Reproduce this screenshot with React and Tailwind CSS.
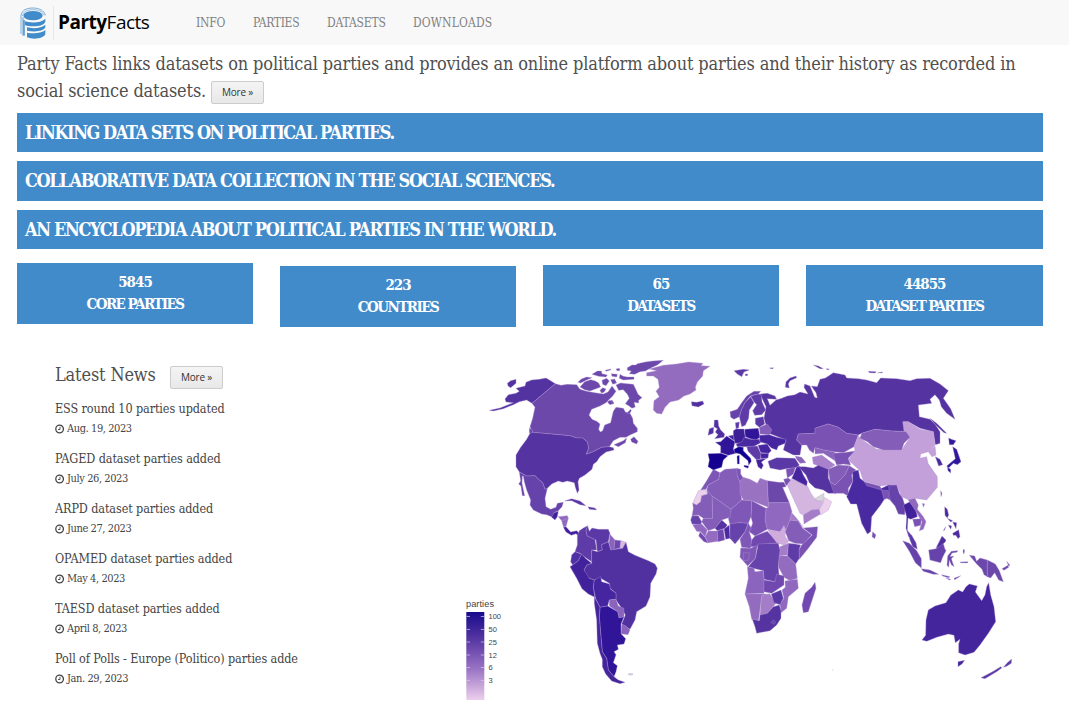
import React from "react";

const SLAB = "font-['DejaVu_Serif_Condensed','DejaVu_Serif',serif] [font-stretch:condensed]";

const NAV = [
  ["INFO", "w-[57px] tracking-[-0.2px]"],
  ["PARTIES", "w-[74px] tracking-[-0.35px]"],
  ["DATASETS", "w-[86px] tracking-[-0.15px]"],
  ["DOWNLOADS", "w-[90px] tracking-[0.15px]"],
];

const BANNERS = [
  ["LINKING DATA SETS ON POLITICAL PARTIES.", "h-[39px] tracking-[-1.45px]"],
  ["COLLABORATIVE DATA COLLECTION IN THE SOCIAL SCIENCES.", "h-[40px] tracking-[-1.34px]"],
  ["AN ENCYCLOPEDIA ABOUT POLITICAL PARTIES IN THE WORLD.", "h-[39px] tracking-[-1.35px]"],
];

const STATS = [
  ["5845", "CORE PARTIES", "w-[236px] mt-0", "tracking-[-1.55px]"],
  ["223", "COUNTRIES", "w-[236px] mt-[3px]", "tracking-[-1.5px]"],
  ["65", "DATASETS", "w-[236px] mt-[2px]", "tracking-[-1.7px]"],
  ["44855", "DATASET PARTIES", "w-[237px] mt-[2px]", "tracking-[-1.65px]"],
];

const NEWS = [
  ["ESS round 10 parties updated", "Aug. 19, 2023"],
  ["PAGED dataset parties added", "July 26, 2023"],
  ["ARPD dataset parties added", "June 27, 2023"],
  ["OPAMED dataset parties added", "May 4, 2023"],
  ["TAESD dataset parties added", "April 8, 2023"],
  ["Poll of Polls - Europe (Politico) parties added", "Jan. 29, 2023"],
];

/* Map regions; every group has its own origin and is drawn at three units per pixel. */
const REGIONS = [
  {
    x: 480, y: 350,
    shapes: [
      ["#5333a0", "M28,181 60,174 100,158 78,156 75,147 85,134 108,130 118,124 108,115 135,108 138,97 155,90 178,88 198,84 212,92 226,101 156,160 140,150 118,155 100,164 70,176 40,183Z M82,100 92,92 108,88 108,100 92,113 84,108Z"],
      ["#6c48ab", "M226,101 243,106 262,103 290,104 300,118 320,124 345,128 370,132 384,126 396,108 402,116 408,124 398,138 388,148 378,158 360,168 335,178 327,195 336,208 350,214 360,222 356,238 361,246 368,242 374,225 392,218 396,200 400,184 408,172 430,175 436,186 450,190 458,205 460,220 472,235 472,245 450,255 438,262 420,262 400,272 388,290 365,292 340,305 318,313 326,295 322,276 308,264 290,264 270,257 158,247 150,230 158,205 165,172 156,160Z"],
      ["#6c48ab", "M386,156 396,150 402,160 390,164Z M452,268 462,260 474,274 470,282 455,276Z M402,284 430,272 440,264 436,278 415,290Z M148,234 158,240 156,256 148,248Z M440,190 452,178 454,182 448,192Z"],
      ["#5533a0", "M158,247 270,257 290,264 308,264 322,276 326,295 318,313 340,305 365,292 388,290 400,293 402,300 378,306 360,320 350,335 340,343 336,358 315,375 298,385 294,395 297,420 292,430 286,412 283,398 262,393 248,397 235,393 215,402 202,415 195,418 188,398 178,390 165,377 140,378 118,366 108,350 108,315 122,292 140,268 150,250Z"],
      ["#6543aa", "M118,366 140,378 165,377 178,390 188,398 195,418 202,415 195,445 198,470 212,478 228,472 232,460 250,457 246,470 235,482 222,488 218,502 200,494 185,492 160,480 150,465 152,450 140,420 133,395 130,378 127,378 126,400 134,437 127,437 123,408 116,402 122,393Z"],
      ["#4020a0", "M222,488 235,484 232,500 225,510 215,502Z M250,532 258,530 272,546 290,542 300,552 296,558 288,551 274,556 258,546Z"],
      ["#9068c0", "M235,500 262,497 265,505 245,512Z M245,512 265,505 258,530 250,530Z"],
      ["#5a38a5", "M254,453 275,446 300,453 318,467 300,464 275,452Z M324,470 345,474 350,480 328,478Z"],
      ["#936cbf", "M500,68 530,62 508,57 550,46 590,42 625,36 668,40 664,47 690,49 670,62 668,78 652,96 646,112 648,120 630,132 612,138 596,150 570,156 555,172 545,192 530,190 520,180 522,152 538,140 528,124 538,112 534,88 520,78 500,78Z"],
      ["#5030a0", "M634,155 650,157 668,153 672,162 655,171 636,167Z"],
    ],
  },
  {
    x: 570, y: 355,
    shapes: [
      ["#6c48ab", "M24,82 34,72 50,66 66,68 48,76 32,84Z M30,96 44,80 62,74 76,78 86,84 92,96 82,100 70,104 60,108 44,104Z M66,58 82,48 94,48 96,56 112,60 108,66 86,64Z M106,46 122,42 122,45 108,49Z M138,42 148,40 150,46 142,48Z M124,56 142,58 140,66 126,64Z M96,76 110,70 118,78 108,92 98,88Z M122,74 134,72 140,84 128,88Z M150,58 160,64 172,66 192,66 192,73 160,75 148,70Z M90,106 98,98 108,102 102,112 94,114Z"],
      ["#6c48ab", "M138,90 152,84 172,86 190,88 198,104 204,118 216,128 206,136 206,144 192,142 196,156 186,160 176,152 166,146 178,130 172,118 160,104 146,106Z"],
      ["#6c48ab", "M172,38 186,30 198,30 202,26 226,21 248,18 280,16 262,30 244,38 226,48 210,50 194,58 178,56 184,48 172,46Z M112,140 120,136 132,146 118,148Z"],
    ],
  },
  {
    x: 540, y: 500,
    shapes: [
      ["#5f3ba8", "M112,108 118,92 130,84 143,77 138,92 142,108 165,118 170,150 155,150 155,185 135,172 120,160 105,155 112,135Z"],
      ["#5a38a5", "M143,77 148,94 156,84 175,88 205,88 210,100 205,125 185,134 187,150 172,155 168,120 142,108 138,92Z"],
      ["#8a63bc", "M210,103 225,120 222,150 212,150 207,130Z"],
      ["#6a48b0", "M225,120 243,122 240,145 222,148Z"],
      ["#dcb8e2", "M243,122 258,127 248,145 240,145Z"],
      ["#5130a0", "M155,190 155,150 172,155 187,150 185,134 205,125 212,150 248,145 258,127 265,155 285,166 325,182 345,192 352,205 348,222 332,250 330,290 318,318 290,335 285,360 270,388 245,372 256,345 245,325 228,300 228,280 210,265 208,250 182,235 163,240 148,235 135,225 132,210 140,195Z"],
      ["#5030a5", "M105,155 125,163 115,182 98,195 92,185 95,165Z"],
      ["#42229a", "M125,163 138,176 155,190 140,195 132,210 148,235 163,240 160,262 165,292 145,282 126,266 110,235 90,200 98,195 115,182Z"],
      ["#4626a0", "M163,240 182,230 185,245 208,252 212,268 228,280 228,298 208,300 203,318 180,322 167,296 160,262Z"],
      ["#8a63bc", "M208,300 228,298 235,318 252,325 252,350 237,354 233,335 208,318Z M245,373 258,378 270,390 264,404 243,401Z"],
      ["#301598", "M180,322 203,318 233,335 237,354 252,350 243,372 243,401 257,416 252,432 232,435 235,448 222,455 228,464 220,488 232,497 228,515 222,530 205,510 200,475 187,455 182,400 178,350Z"],
      ["#45259c", "M163,290 180,322 178,350 182,400 187,455 200,475 205,510 222,530 235,540 255,547 240,551 215,543 197,522 187,500 187,478 180,460 172,430 170,360 163,310Z"],
      ["#d8d8d8", "M266,521 278,521 277,525 266,525Z"],
    ],
  },
  {
    x: 680, y: 450,
    shapes: [
      ["#7d55b5", "M100,58 120,68 116,88 85,105 78,118 62,120 80,92Z"],
      ["#ecd0ec", "M55,122 82,120 82,133 65,137 62,155 50,165 38,160Z"],
      ["#835db8", "M120,68 135,58 175,55 172,78 180,95 185,150 153,178 96,138 80,120 85,105 116,88Z"],
      ["#7a52b3", "M170,57 182,57 182,72 190,84 180,95 172,78Z"],
      ["#9a72c2", "M180,95 190,82 210,88 232,100 240,85 262,92 265,172 215,152 190,150 180,130Z"],
      ["#6c48ab", "M262,92 295,97 312,97 318,110 308,112 328,158 265,158Z"],
      ["#9068c0", "M265,158 328,158 336,185 330,210 318,240 300,245 262,238 255,210 258,175 265,172Z"],
      ["#7a52b3", "M215,152 258,175 255,210 262,238 225,258 208,245 218,220 213,200Z"],
      ["#7f58b7", "M153,178 185,150 215,152 213,200 205,220 175,218 150,225 145,205Z"],
      ["#835db8", "M96,138 153,178 150,202 125,210 105,235 85,242 65,215 70,205 98,205Z"],
      ["#835db8", "M82,120 96,138 98,205 70,205 55,195 36,198 40,175 38,160 50,165 62,155 65,137 82,133Z"],
      ["#6543aa", "M36,198 55,197 65,215 62,225 36,222 32,210Z"],
      ["#9068c0", "M38,224 65,222 82,240 75,260 62,245 50,244Z"],
      ["#7048b0", "M60,246 75,262 85,279 72,275 56,258Z"],
      ["#936cbf", "M85,243 112,243 114,274 85,278 75,260Z"],
      ["#5533a0", "M105,235 125,210 142,225 135,235 112,242Z"],
      ["#7048b0", "M112,242 130,237 134,270 114,275Z"],
      ["#4a2aa0", "M132,237 148,225 150,265 137,268Z"],
      ["#6543aa", "M150,222 175,218 205,220 195,245 182,262 165,282 150,265Z"],
      ["#7f58b7", "M205,220 214,235 208,245 215,270 212,295 185,292 180,268 195,245Z"],
      ["#7048b0", "M225,258 262,244 275,258 295,280 265,280 235,290 212,290 215,270Z"],
      ["#cfacdc", "M264,240 300,245 312,226 318,240 315,258 326,275 312,285 290,278 275,258Z"],
      ["#835db8", "M330,210 355,213 368,235 395,255 370,282 345,280 326,272 316,245Z"],
      ["#a47cc8", "M335,188 350,205 370,232 355,213 330,210Z"],
      ["#7a52b3", "M370,234 413,230 410,262 385,295 358,328 357,300 365,285 397,255Z"],
      ["#5f3ba8", "M325,280 345,282 362,285 357,300 358,325 347,342 322,318Z"],
      ["#a47cc8", "M300,290 325,280 322,315 298,318Z"],
      ["#6543aa", "M235,282 265,280 295,280 300,300 295,350 297,372 285,395 252,388 250,362 220,355 205,350 226,325Z"],
      ["#7f58b7", "M182,294 212,295 232,285 226,325 203,348 180,322Z M190,308 208,308 206,330 190,332Z"],
      ["#936cbf", "M298,318 322,318 347,342 352,385 330,392 312,382 295,350Z"],
      ["#8b64bd", "M202,350 222,355 225,365 250,362 252,388 252,430 195,432 205,385Z"],
      ["#7048b0", "M252,390 285,395 290,372 312,378 312,405 275,430 252,425Z"],
      ["#9068c0", "M315,393 352,388 355,415 325,440 320,475 303,488 300,462 312,445 306,420 316,412Z"],
      ["#936cbf", "M195,432 270,432 245,437 238,495 235,512 215,508 208,470Z"],
      ["#a47cc8", "M245,437 270,432 288,460 262,490 240,495Z"],
      ["#5a38a5", "M274,432 303,420 310,445 300,464 282,458Z"],
      ["#5533a0", "M217,508 238,512 240,495 262,490 280,470 298,465 303,482 303,505 290,525 270,542 230,550 225,530Z"],
      ["#6543aa", "M273,517 280,510 287,516 281,523Z"],
      ["#7048b0", "M405,397 408,415 385,485 370,488 366,465 375,430 395,412Z"],
      ["#d3b5df", "M318,95 335,88 355,95 382,108 392,128 405,148 430,155 418,178 395,180 370,195 360,190 335,135Z"],
      ["#a47cc8", "M370,195 395,180 418,178 422,192 395,208 372,222Z"],
      ["#ecd0ec", "M432,142 455,155 445,180 422,195 418,178 430,160Z"],
      ["#d8d8d8", "M404,146 432,130 430,152 412,152Z"],
      ["#4525a0", "M340,75 350,50 360,50 370,75 382,95 380,108 355,95 335,85Z"],
      ["#7a52b3", "M318,58 347,50 340,72 322,84Z M311,88 325,84 332,90 318,108Z"],
    ],
  },
  {
    x: 780, y: 350,
    shapes: [
      ["#5533a0", "M-60,132 -38,130 -15,138 -10,148 -38,146 -30,166 -12,150 5,145 22,138 45,134 60,126 84,132 72,112 74,102 90,108 104,142 112,144 108,128 94,108 112,110 120,88 136,84 150,75 160,68 195,75 200,84 235,86 260,90 290,98 302,84 350,86 390,92 410,86 450,85 480,102 505,122 490,145 512,176 525,208 500,190 484,170 478,150 465,134 450,148 455,160 415,165 418,200 450,208 465,222 480,245 480,280 466,284 460,245 420,235 385,215 370,215 378,245 335,243 285,238 245,250 235,255 200,250 175,232 145,222 105,235 105,250 55,252 50,270 65,285 60,315 40,315 10,300 18,270 -20,255 -35,250 -42,225 -48,205 -42,170Z"],
      ["#5533a0", "M16,112 18,95 30,84 48,78 50,83 30,92 25,102 28,114Z M100,45 115,48 130,56 120,56Z M138,56 148,57 144,60Z M265,64 288,65 286,69 268,68Z M292,68 308,66 306,69Z M450,205 470,220 500,250 492,248 468,226Z"],
      ["#7a52b3", "M50,270 55,252 105,250 105,235 145,222 175,232 200,250 235,255 222,290 190,308 160,305 130,300 105,293 100,310 88,300 80,285 65,285Z"],
      ["#8a63bc", "M105,293 130,300 160,305 185,320 165,332 130,310 105,312Z"],
      ["#a980cc", "M97,322 125,315 165,345 145,358 100,342Z"],
      ["#7a52b3", "M160,310 190,308 225,303 205,325 212,345 190,342 170,345 165,332Z"],
      ["#5533a0", "M44,338 60,350 75,350 100,354 115,346 145,358 145,385 168,430 145,430 130,420 105,414 88,398 78,375 60,355Z"],
      ["#835db8", "M145,358 175,345 208,347 195,375 165,405 150,395Z"],
      ["#7a52b3", "M150,395 165,405 195,375 208,347 228,360 215,375 218,395 205,415 205,438 190,430 162,430Z"],
      ["#4a2aa0", "M218,365 235,360 240,385 260,400 305,415 325,405 345,400 350,412 335,430 328,450 318,440 302,465 275,500 272,545 262,552 245,520 230,462 212,462 200,440 218,395Z"],
      ["#7a52b3", "M253,395 300,408 305,420 260,407Z M305,420 325,422 326,445 312,448Z M278,545 288,555 284,566 276,560Z"],
      ["#c3a0da", "M235,258 255,275 290,298 365,300 390,262 372,245 368,215 385,215 420,238 460,245 465,285 445,305 422,312 420,325 440,320 444,340 472,380 472,412 440,450 405,445 392,452 365,440 350,405 325,405 300,408 250,392 240,362 205,330 225,300 222,290Z"],
      ["#835db8", "M245,250 285,238 335,243 378,245 390,262 372,280 365,300 310,300 280,290 262,275 240,265Z"],
      ["#c3a0da", "M445,305 465,288 468,315 456,320Z"],
      ["#4a2aa0", "M466,320 480,328 488,344 476,348Z"],
      ["#30189c", "M506,264 514,268 528,272 520,284 508,284Z M518,290 530,298 543,335 532,344 520,340 506,354 500,348 526,326Z M502,352 512,358 512,369 504,362Z"],
      ["#6543aa", "M326,408 350,405 358,430 368,445 376,470 374,494 355,492 345,468 330,450Z M482,422 486,430 483,440Z"],
      ["#42229a", "M370,465 390,455 408,480 412,500 392,508 384,504 382,540 390,556 386,560 378,535 380,500Z"],
      ["#9068c0", "M385,450 405,445 415,465 412,478 430,500 438,515 430,538 418,542 426,515 405,480Z M427,460 434,462 430,472Z"],
      ["#7a52b3", "M398,508 424,506 422,526 404,530Z"],
    ],
  },
  {
    x: 680, y: 350,
    shapes: [
      ["#6543aa", "M150,185 172,178 185,158 200,138 222,124 242,124 235,132 212,137 195,158 185,178 178,200 162,208 152,202Z"],
      ["#5f3ba8", "M178,200 185,178 195,158 212,140 222,158 208,180 206,205 196,226 185,230Z"],
      ["#5f3ba8", "M212,138 235,132 244,134 246,155 257,180 245,194 224,196 218,182 230,164 222,155Z"],
      ["#5030a0", "M103,210 114,210 116,228 122,240 134,252 132,262 104,266 114,254 106,246 112,236 102,230Z M88,236 101,232 100,250 84,256Z"],
      ["#301598", "M106,277 122,275 140,258 165,275 160,298 168,310 145,316 122,308 122,288Z"],
      ["#150090", "M84,311 122,310 144,317 130,330 125,352 100,360 84,350 88,330Z"],
      ["#3d1f98", "M160,242 168,237 192,237 196,262 186,280 165,280 160,260Z M145,258 160,255 162,272Z"],
      ["#301598", "M194,238 235,235 240,262 228,270 210,266 196,260Z"],
      ["#4a2aa0", "M186,275 192,262 212,268 238,268 242,278 220,290 200,290 172,290 168,282Z"],
      ["#5a38a5", "M226,205 250,200 254,222 238,232 226,222Z M166,218 178,216 176,234 168,236Z"],
      ["#835db8", "M238,232 262,222 276,240 268,254 240,252Z"],
      ["#4525a0", "M238,256 268,254 290,262 318,268 316,280 295,288 290,300 274,294 262,282 240,276Z"],
      ["#4525a0", "M234,286 262,282 274,302 266,310 242,308Z M240,310 266,310 264,324 244,326Z"],
      ["#5f3ba8", "M200,290 232,288 242,310 242,326 230,330 218,318 204,304Z"],
      ["#42229a", "M228,330 260,325 244,336 250,346 244,358 234,350Z"],
      ["#100090", "M162,298 176,290 190,292 190,302 212,325 214,334 206,346 204,332 180,312 164,308Z M192,346 206,348 204,355 192,350Z M171,318 178,316 178,342 172,342Z"],
      ["#5a38a5", "M264,334 290,323 345,325 358,345 350,352 318,356 300,360 270,354Z"],
      ["#8a63bc", "M346,318 365,322 378,338 360,340 350,328Z"],
      ["#5a38a5", "M162,62 190,58 208,60 192,66 185,80 172,72Z M196,72 203,72 202,77 196,77Z M268,54 280,53 278,57Z"],
    ],
  },
  {
    x: 880, y: 480,
    shapes: [
      ["#5a38a5", "M82,152 95,166 108,188 112,208 98,200 90,180Z"],
      ["#6543aa", "M68,182 88,190 110,212 124,236 124,264 106,248 88,214Z M124,266 150,270 176,283 160,283 130,274Z M185,284 210,290 205,293 188,288Z M222,295 242,287 236,292 224,299Z M198,294 212,298 208,300Z"],
      ["#6543aa", "M146,210 168,206 188,184 194,205 198,212 188,232 182,248 150,240Z"],
      ["#5030a0", "M168,204 186,168 198,180 196,186 178,200Z"],
      ["#6543aa", "M203,228 214,214 234,212 230,217 216,219 210,230 222,228 214,236 222,260 214,254 208,240 206,262 201,256Z M250,208 254,210 252,222 249,216Z M240,246 264,245 262,249 242,248Z"],
      ["#4a2aa0", "M194,80 202,88 206,105 202,114 195,106Z M202,115 218,122 212,126Z M218,126 230,128 228,146 222,134Z M218,160 236,149 240,170 234,176 228,166 220,166Z M205,135 215,138 212,148Z M190,152 197,140 194,150Z"],
      ["#6c48ab", "M268,226 284,228 290,244 300,234 322,240 322,290 312,284 306,268 290,252Z"],
      ["#6c48ab", "M322,240 346,252 358,272 370,305 356,300 344,278 332,294 322,290Z M366,266 384,256 386,262 372,271Z M380,244 390,256 386,258Z"],
      ["#45259c", "M126,480 137,466 138,420 145,390 165,378 198,368 212,346 235,330 248,336 258,320 268,312 292,318 286,336 305,362 315,345 320,320 326,308 332,345 342,380 347,425 325,460 300,495 282,517 255,525 236,518 236,492 240,478 226,488 222,466 205,462 170,472 140,484Z M234,545 254,541 246,552 234,560Z"],
      ["#5a38a5", "M303,593 340,574 362,560 366,563 352,574 315,596Z M370,562 382,548 395,537 394,550 380,559Z"],
    ],
  },
];

const TICKS = [
  ["100", 616.5], ["50", 629.5], ["25", 642], ["12", 655], ["6", 667.5], ["3", 680.5],
];

function MoreButton() {
  return (
    <button className="h-[23px] w-[53px] rounded-[2px] border border-[#ccc] bg-gradient-to-b from-[#f4f4f4] to-[#e8e8e8] text-center font-['Open_Sans',sans-serif] text-[10px] leading-[21px] tracking-[-0.2px] text-[#333] [font-stretch:normal]">
      More »
    </button>
  );
}

function Clock() {
  return (
    <svg className="mt-[5px] mr-[3px] h-[10px] w-[9px] shrink-0" viewBox="0 0 9 10" fill="none" stroke="#444">
      <circle cx="4.6" cy="5" r="3.8" strokeWidth="1.3" />
      <path d="M5 2.8V5.5H3" strokeWidth="0.9" />
    </svg>
  );
}

function Logo() {
  return (
    <svg className="h-[34px] w-[28px]" viewBox="0 0 84 102">
      <g fill="none" stroke="#428bca" opacity="0.85">
        <path d="M6 84V28C8 12 24 6 42 6s34 8 37 22" strokeWidth="2.5" />
        <path d="M12 90V34" strokeWidth="3" />
        <path d="M10 30C12 16 26 11 42 11s30 6 33 17" strokeWidth="1.8" />
      </g>
      <g fill="#428bca">
        <ellipse cx="42" cy="29" rx="29" ry="14" />
        <path d="M18 46c18 6 48 5 61-8v9c-3 9-17 14-37 14-9 0-17-1-24-4Z" />
        <path d="M24 64c19 5 45 2 55-8v8c-3 10-28 16-55 10Z" />
        <path d="M24 80c19 4 45 1 55-8v13c-5 13-36 17-55 9Z" />
        <path d="M12 42h6v48l-6-4Z" opacity="0.7" />
      </g>
    </svg>
  );
}

function WorldMap() {
  return (
    <svg className="block h-[355px] w-[619px]" viewBox="450 350 619 355">
      <defs>
        <linearGradient id="scale" x1="0" y1="0" x2="0" y2="1">
          <stop offset="0" stopColor="#170b8c" />
          <stop offset="0.3" stopColor="#5535a2" />
          <stop offset="0.65" stopColor="#9a74c4" />
          <stop offset="1" stopColor="#eccfec" />
        </linearGradient>
      </defs>
      {REGIONS.map((r) => (
        <g key={r.x + "-" + r.y} transform={`translate(${r.x} ${r.y}) scale(0.33333)`}>
          {r.shapes.map(([fill, d], i) => (
            <path key={i} d={d} fill={fill} stroke="#b092d2" strokeWidth="1.1" strokeLinejoin="round" />
          ))}
        </g>
      ))}
      <path d="M832 670h1.5" stroke="#d8d8d8" />
      <g className="font-['Liberation_Sans',sans-serif]" fill="#444">
        <text x="466" y="607" fontSize="9.2" textLength="28">parties</text>
        <rect x="466.3" y="612" width="18" height="88" fill="url(#scale)" />
        {TICKS.map(([t, y]) => (
          <g key={t}>
            <path d={`M466.5 ${y}h3.5M480.8 ${y}h3.5`} stroke="#d9c8ea" strokeWidth="0.7" />
            <text x="488.5" y={y + 2.8} fontSize="7.5">{t}</text>
          </g>
        ))}
      </g>
    </svg>
  );
}

export default function App() {
  return (
    <div className={`h-[705px] w-[1069px] overflow-hidden bg-white text-[#505050] ${SLAB}`}>
      <header className="flex h-[45px] items-center bg-[#f8f8f8] pl-[19px]">
        <Logo />
        <div className="ml-[6px] h-[34px] w-px bg-[#e7e7e7]" />
        <div className="ml-[4px] w-[138px] pb-[2px] font-['Open_Sans',sans-serif] text-[19px] leading-[42px] tracking-[-0.5px] text-black [font-stretch:normal]">
          <b className="font-bold">Party</b>Facts
        </div>
        <nav className="flex text-[12px] text-[#808080]">
          {NAV.map(([t, c]) => (
            <a key={t} className={`${c} whitespace-nowrap`}>{t}</a>
          ))}
        </nav>
      </header>
      <main>
        <div className="h-[68px] px-[17px] pt-[5px] text-[18px] leading-[27px] whitespace-nowrap">
          <p className="tracking-[-0.142px]">Party Facts links datasets on political parties and provides an online platform about parties and their history as recorded in</p>
          <div className="flex">
            <p className="w-[194px] tracking-[-0.15px]">social science datasets.</p>
            <div className="mt-[4px] flex"><MoreButton /></div>
          </div>
        </div>
        <div className="flex w-[1043px] flex-col gap-[9px] pl-[17px] text-[18px] font-bold text-white">
          {BANNERS.map(([t, c]) => (
            <h2 key={t} className={`${c} bg-[#428bca] pl-[8px] leading-[39px] whitespace-nowrap`}>{t}</h2>
          ))}
        </div>
        <div className="mt-[14px] flex h-[87px] w-[1043px] items-start gap-[27px] pl-[17px] text-center text-[15px] leading-[22px] font-bold text-white">
          {STATS.map(([n, t, box, track]) => (
            <div key={t} className={`${box} h-[61px] shrink-0 bg-[#428bca] pt-[8px]`}>
              <div className="tracking-[-1px]">{n}</div>
              <div className={track}>{t}</div>
            </div>
          ))}
        </div>
        <div className="flex">
          <section className="w-[450px] pt-[12px] pl-[55px]">
            <div className="flex h-[37px]">
              <h3 className="w-[115px] text-[18px] leading-[26px] tracking-[-0.15px]">Latest News</h3>
              <div className="mt-[4px] flex"><MoreButton /></div>
            </div>
            <ul className="w-[243px]">
              {NEWS.map(([t, d]) => (
                <li key={t} className="h-[50px] overflow-hidden whitespace-nowrap">
                  <div className="text-[12.5px] leading-[20px] tracking-[-0.1px] text-[#444]">{t}</div>
                  <div className="flex text-[11px] leading-[19px] tracking-[-0.42px] text-[#444]"><Clock />{d}</div>
                </li>
              ))}
            </ul>
          </section>
          <WorldMap />
        </div>
      </main>
    </div>
  );
}
